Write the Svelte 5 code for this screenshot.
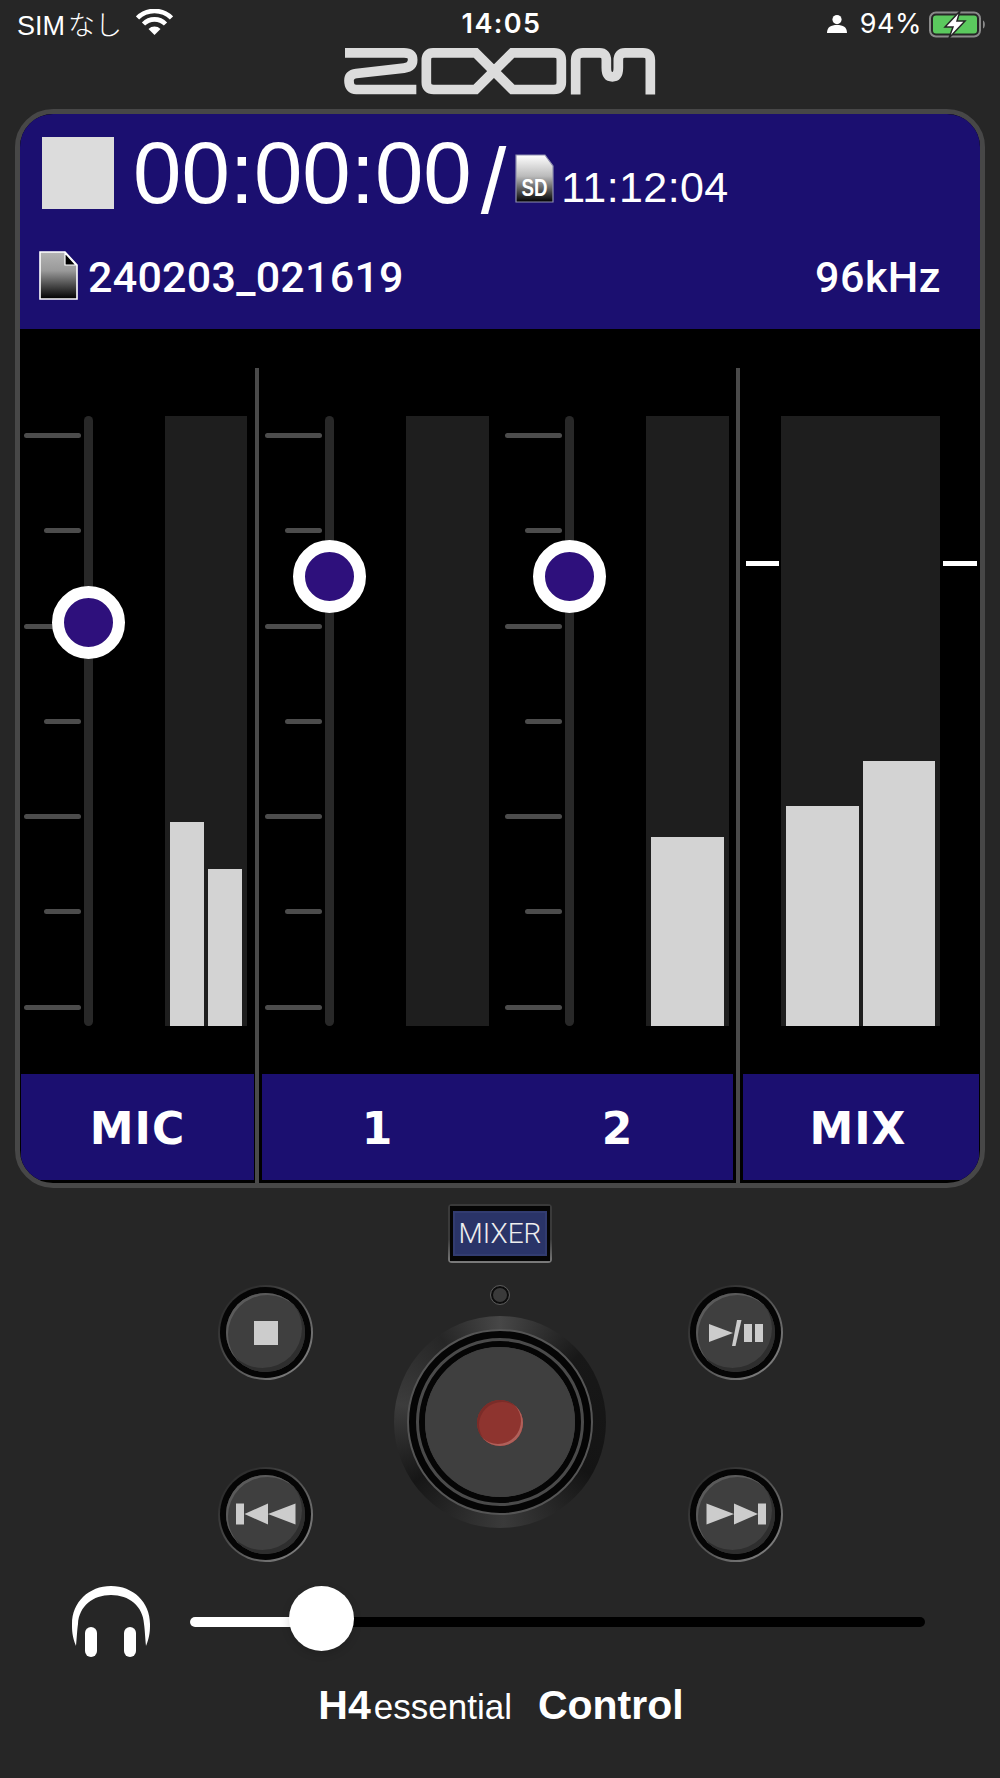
<script>
  const ticks = [57, 37, 57, 37, 57, 37, 57];

  const strips = [
    { knob: 206, meter: [204, 157], width: 82 },
    { knob: 160, meter: [], width: 83 },
    { knob: 160, meter: [189], width: 83 }
  ];

  const sliderFill = 132;
</script>

<div class="app">
  <div class="status">
    <div class="status-left">
      <span class="carrier">SIM<span class="cjk">なし</span></span>
      <svg class="wifi" viewBox="0 0 37 27" width="37" height="27">
        <path d="M18.5 26 L12.5 20 A8.5 8.5 0 0 1 24.5 20 Z" fill="#fff" />
        <path d="M7.5 15 A15.5 15.5 0 0 1 29.5 15" fill="none" stroke="#fff" stroke-width="4.6" />
        <path d="M1.5 9 A24 24 0 0 1 35.5 9" fill="none" stroke="#fff" stroke-width="4.6" />
      </svg>
    </div>
    <div class="clock">14:05</div>
    <div class="status-right">
      <svg viewBox="0 0 20 18" width="20" height="18">
        <circle cx="10" cy="4.6" r="4.6" fill="#fff" />
        <path d="M0 18 C0 12 4 10 10 10 C16 10 20 12 20 18 Z" fill="#fff" />
      </svg>
      <span class="pct">94%</span>
      <svg class="battery" viewBox="0 0 57 27" width="57" height="27">
        <rect x="1" y="1.5" width="50" height="24" rx="6" fill="none" stroke="#8a8a8a" stroke-width="2" />
        <rect x="4" y="4.5" width="44" height="18" rx="3" fill="#5bc95e" />
        <path d="M54 9.5 C56.5 10.5 56.5 16.5 54 17.5 Z" fill="#8a8a8a" />
        <path d="M31 0 L16 16 H24 L20 27 L36 10 H28 Z" fill="#fff" stroke="#262626" stroke-width="1.5" />
      </svg>
    </div>
  </div>

  <svg class="logo" viewBox="75 55 936 140" width="312" height="47">
    <g fill="none" stroke="#dcdcdc" stroke-width="29">
      <path d="M78 69 H255 Q281 69 281 90 Q281 112 255 115 L112 131 Q90 134 90 152 Q90 179 112 179 H292" />
      <path d="M342 69 H470 L580 179 H705 Q727 179 727 157 V91 Q727 69 705 69 H580 L470 179 H344 Q322 179 322 157 V91 Q322 69 342 69 Z" />
      <path d="M770 194 V91 Q770 69 792 69 H842 Q862 69 862 91 V114 Q862 141 880 141 Q898 141 898 114 V91 Q898 69 918 69 H972 Q994 69 994 91 V194" />
    </g>
  </svg>

  <div class="panel">
    <div class="head">
      <div class="time-row">
        <div class="stop-mark"></div>
        <span class="time">00:00:00</span>
        <span class="slash">/</span>
        <svg class="sd" viewBox="0 0 39 49" width="39" height="49">
          <defs>
            <linearGradient id="sdfill" x1="0" y1="0" x2="0" y2="1">
              <stop offset="0" stop-color="#fff" />
              <stop offset="0.45" stop-color="#bbb" />
              <stop offset="1" stop-color="#000" />
            </linearGradient>
          </defs>
          <path d="M1 1 H30 L38 12 V48 H1 Z" fill="url(#sdfill)" stroke="#8f8fb0" stroke-width="1.2" />
          <text x="6.5" y="42" textLength="26" lengthAdjust="spacingAndGlyphs" class="sd-text">SD</text>
        </svg>
        <span class="remain">11:12:04</span>
      </div>
      <div class="file-row">
        <svg class="file" viewBox="0 0 39 49" width="39" height="49">
          <defs>
            <linearGradient id="filefill" x1="0" y1="0" x2="0" y2="1">
              <stop offset="0" stop-color="#b4b4b4" />
              <stop offset="0.4" stop-color="#999" />
              <stop offset="1" stop-color="#000" />
            </linearGradient>
          </defs>
          <path d="M1 1 H26 L38 14 V48 H1 Z" fill="url(#filefill)" stroke="#fff" stroke-width="1.6" />
          <path d="M26 2 L37 14 H26 Z" fill="#000" stroke="#fff" stroke-width="1.2" />
        </svg>
        <span class="name">240203_021619</span>
        <span class="rate">96kHz</span>
      </div>
    </div>

    <div class="board">
      <div class="group mic">
        <div class="strips">
          {@render strip(strips[0])}
        </div>
        <div class="label">MIC</div>
      </div>
      <div class="rule"></div>
      <div class="group stereo">
        <div class="strips">
          {@render strip(strips[1])}
          {@render strip(strips[2])}
        </div>
        <div class="label"><span>1</span><span>2</span></div>
      </div>
      <div class="rule"></div>
      <div class="group mix">
        <div class="strips">
          <div class="meter master">
            <i class="peak peak-l"></i>
            <i class="peak peak-r"></i>
            <b style="height: 220px"></b>
            <b style="height: 265px"></b>
          </div>
        </div>
        <div class="label">MIX</div>
      </div>
    </div>
  </div>

  <div class="mode">
    <div class="mode-in">MIXER</div>
  </div>

  <div class="deck">
    <div class="side">
      <div class="btn"><div class="btn-ring"><div class="btn-face">
        <svg viewBox="0 0 24 24" width="24" height="24"><rect width="24" height="24" fill="#ccc" /></svg>
      </div></div></div>
      <div class="btn"><div class="btn-ring"><div class="btn-face">
        <svg class="skip" viewBox="0 0 60 22" width="60" height="22">
          <rect x="0" y="0.5" width="8" height="21" fill="#ccc" />
          <path d="M8.5 11 L32 0.5 V21.5 Z M32 11 L59.5 0.5 V21.5 Z" fill="#ccc" />
        </svg>
      </div></div></div>
    </div>

    <div class="center">
      <div class="led"></div>
      <div class="jog">
        <div class="jog-a"><div class="jog-b"><div class="jog-face">
          <div class="rec"></div>
        </div></div></div>
      </div>
    </div>

    <div class="side right">
      <div class="btn"><div class="btn-ring"><div class="btn-face">
        <svg viewBox="0 0 54 26" width="54" height="26">
          <path d="M0 4 L24 13 L0 22 Z" fill="#ccc" />
          <path d="M28 0 H32.5 L26.5 26 H23 Z" fill="#ccc" />
          <rect x="35" y="4" width="8" height="18" fill="#ccc" />
          <rect x="46" y="4" width="8" height="18" fill="#ccc" />
        </svg>
      </div></div></div>
      <div class="btn"><div class="btn-ring"><div class="btn-face">
        <svg class="skip" viewBox="0 0 60 22" width="60" height="22">
          <path d="M0.5 0.5 L28 11 L0.5 21.5 Z M28 0.5 L52 11 L28 21.5 Z" fill="#ccc" />
          <rect x="52" y="0.5" width="8" height="21" fill="#ccc" />
        </svg>
      </div></div></div>
    </div>
  </div>

  <div class="volume">
    <svg class="phones" viewBox="0 0 78 71" width="78" height="71">
      <path d="M4 60 C0 50 0 44 0 38 C0 16 17 0 39 0 C61 0 78 16 78 38 C78 44 78 50 74 60 C73 50 73 45 72 38 C71 20 57 9 39 9 C21 9 7 20 6 38 C5 45 5 50 4 60 Z" fill="#fff" />
      <rect x="13" y="41" width="12" height="30" rx="6" fill="#fff" />
      <rect x="52" y="41" width="12" height="30" rx="6" fill="#fff" />
    </svg>
    <div class="slider">
      <div class="track"><div class="fill" style="width: {sliderFill}px"></div></div>
      <div class="thumb" style="left: {sliderFill - 33}px"></div>
    </div>
  </div>

  <div class="brand">
    <strong>H4</strong><span class="thin">essential</span><strong class="ctl">Control</strong>
  </div>
</div>

{#snippet strip(s)}
  <div class="strip">
    <div class="fader">
      <div class="ticks">
        {#each ticks as w}
          <i style="width: {w}px"></i>
        {/each}
      </div>
      <div class="rail">
        <div class="knob" style="top: {s.knob - 36.5}px"></div>
      </div>
    </div>
    <div class="meter" style="width: {s.width}px">
      {#each s.meter as h}
        <b style="height: {h}px"></b>
      {/each}
    </div>
  </div>
{/snippet}

<style>
  :global(body) {
    margin: 0;
    background: #262626;
  }

  .app {
    width: 1000px;
    height: 1778px;
    background: #262626;
    display: flex;
    flex-direction: column;
    font-family: "Liberation Sans", Arial, sans-serif;
    color: #fff;
    overflow: hidden;
  }

  /* status bar */
  .status {
    height: 47px;
    padding: 0 14px 0 17px;
    display: grid;
    grid-template-columns: 1fr auto 1fr;
    align-items: center;
    font-size: 27px;
    flex-shrink: 0;
  }
  .status-left {
    display: flex;
    align-items: center;
    gap: 14px;
    height: 47px;
  }
  .carrier {
    font-family: "Liberation Sans", sans-serif;
  }
  .cjk {
    font-family: "Noto Sans CJK JP", sans-serif;
    font-weight: 300;
    font-size: 27px;
    margin-left: 3px;
  }
  .wifi {
    margin-top: -2px;
  }
  .clock {
    font-family: Inter, sans-serif;
    font-weight: 600;
    font-size: 27px;
    letter-spacing: 1.4px;
  }
  .status-right {
    display: flex;
    align-items: center;
    justify-content: flex-end;
    gap: 13px;
  }
  .pct {
    font-family: Inter, sans-serif;
    font-size: 27px;
    letter-spacing: 0.5px;
    margin-right: -6px;
  }
  .battery {
    margin-top: 1px;
  }

  .logo {
    align-self: center;
    margin-top: 1px;
    flex-shrink: 0;
  }

  /* main panel */
  .panel {
    margin: 14px 15px 0;
    width: 970px;
    height: 1079px;
    box-sizing: border-box;
    border: 5px solid #474747;
    border-radius: 38px;
    background: #000;
    overflow: hidden;
    flex-shrink: 0;
  }
  .head {
    height: 215px;
    background: #1b0f70;
    box-sizing: border-box;
    display: flex;
    flex-direction: column;
  }
  .time-row {
    height: 137px;
    padding: 23px 0 0 22px;
    box-sizing: border-box;
    display: flex;
    align-items: flex-start;
  }
  .stop-mark {
    width: 72px;
    height: 72px;
    background: #dcdcdc;
  }
  .time {
    font-size: 87px;
    line-height: 87px;
    margin: -8px 0 0 19px;
  }
  .slash {
    font-size: 92px;
    line-height: 92px;
    margin: -2px 0 0 9px;
  }
  .sd {
    margin: 17px 0 0 9px;
  }
  .sd-text {
    font-family: "Liberation Sans", sans-serif;
    font-weight: 700;
    font-size: 23.7px;
    fill: #fff;
  }
  .remain {
    font-size: 43px;
    line-height: 43px;
    letter-spacing: 0.4px;
    margin: 28.5px 0 0 7px;
  }
  .file-row {
    display: flex;
    align-items: flex-start;
    padding: 0 39px 0 19px;
  }
  .name,
  .rate {
    font-family: Roboto, sans-serif;
    font-weight: 500;
    font-size: 43px;
    line-height: 52px;
  }
  .name {
    margin-left: 10px;
    letter-spacing: 0.25px;
  }
  .rate {
    margin-left: auto;
    letter-spacing: 0.5px;
  }

  /* mixer */
  .board {
    height: 854px;
    display: flex;
  }
  .group {
    display: flex;
    flex-direction: column;
  }
  .mic {
    width: 235px;
  }
  .stereo {
    width: 477px;
  }
  .mix {
    width: 240px;
  }
  .rule {
    width: 4px;
    margin-top: 39px;
    background: #4a4a4a;
  }
  .strips {
    height: 745px;
    box-sizing: border-box;
    padding-top: 87px;
    display: flex;
    align-items: flex-start;
    gap: 16px;
  }
  .mic .strips {
    padding-left: 4px;
  }
  .stereo .strips {
    padding-left: 6px;
  }
  .mix .strips {
    padding-left: 41px;
  }
  .strip {
    display: flex;
    height: 610px;
    gap: 72px;
  }
  .fader {
    display: flex;
    gap: 3px;
  }
  .ticks {
    width: 57px;
    display: flex;
    flex-direction: column;
    align-items: flex-end;
    padding-top: 17px;
    gap: 90.3px;
  }
  .ticks i {
    display: block;
    height: 5px;
    border-radius: 3px;
    background: #4c4c4c;
  }
  .rail {
    position: relative;
    width: 9px;
    height: 610px;
    border-radius: 5px;
    background: #282828;
  }
  .knob {
    position: absolute;
    left: -32px;
    width: 49px;
    height: 49px;
    border: 12px solid #fff;
    border-radius: 50%;
    background: #2e107c;
  }
  .meter {
    position: relative;
    height: 610px;
    box-sizing: border-box;
    padding: 0 5px;
    display: flex;
    align-items: flex-end;
    gap: 4px;
    background: #1e1e1e;
  }
  .meter b {
    display: block;
    flex: 1;
    background: #d3d3d3;
  }
  .master {
    width: 159px;
    gap: 4px;
  }
  .peak {
    position: absolute;
    top: 145px;
    height: 5px;
    background: #fff;
  }
  .peak-l {
    left: -35px;
    width: 33px;
  }
  .peak-r {
    right: -37px;
    width: 34px;
  }
  .label {
    height: 106px;
    box-sizing: border-box;
    padding-top: 3px;
    background: #1b0f70;
    display: flex;
    align-items: center;
    justify-content: center;
    font-family: "DejaVu Sans", sans-serif;
    font-weight: 700;
    font-size: 44px;
    letter-spacing: 1px;
  }
  .mic .label {
    margin: 0 1px;
  }
  .stereo .label {
    margin: 0 3px;
  }
  .stereo .label span {
    flex: none;
    width: 240px;
    text-align: center;
  }
  .mix .label {
    margin: 0 1px 0 3px;
    padding-right: 6px;
  }

  /* hardware buttons */
  .mode {
    align-self: center;
    margin-top: 16px;
    width: 104px;
    height: 59px;
    box-sizing: border-box;
    padding: 2px;
    border-radius: 4px;
    background: linear-gradient(#3a3a3a, #3a3a3a 60%, #7c7c7c);
    flex-shrink: 0;
  }
  .mode-in {
    height: 100%;
    box-sizing: border-box;
    border: solid #050505;
    border-width: 5px 3px;
    background: #2a3468;
    box-shadow: inset 0 0 0 2px #323c70;
    display: flex;
    align-items: center;
    justify-content: center;
    font-family: Roboto, sans-serif;
    font-weight: 300;
    font-size: 28px;
    color: #eee;
  }
  .deck {
    margin-top: 22px;
    display: flex;
    justify-content: center;
    gap: 81px;
    padding-left: 1px;
    flex-shrink: 0;
  }
  .side {
    display: flex;
    flex-direction: column;
    gap: 87px;
  }
  .right {
    margin-left: 1px;
  }
  .btn {
    width: 95px;
    height: 95px;
    box-sizing: border-box;
    padding: 2px;
    border-radius: 50%;
    background: linear-gradient(135deg, #2f2f2f 20%, #7a7a7a 85%);
  }
  .btn-ring {
    height: 100%;
    border-radius: 50%;
    background: #050505;
    display: flex;
    align-items: center;
    justify-content: center;
  }
  .btn-face {
    width: 79px;
    height: 79px;
    border-radius: 50%;
    background: #3f3f3f;
    box-shadow:
      inset 2px 2px 0 #5a5a5a,
      inset -3px -4px 0 #2e2e2e;
    display: flex;
    align-items: center;
    justify-content: center;
  }
  .skip {
    margin-top: -2px;
  }
  .center {
    display: flex;
    flex-direction: column;
    align-items: center;
    gap: 12px;
    padding-top: 1px;
  }
  .led {
    width: 14px;
    height: 14px;
    border: 2px solid #0c0c0c;
    outline: 1px solid #5a5a5a;
    border-radius: 50%;
    background: #3a3a3a;
  }
  .jog {
    width: 212px;
    height: 212px;
    border-radius: 50%;
    background: conic-gradient(
      #474747 0deg,
      #181818 50deg,
      #141414 120deg,
      #3a3a3a 178deg,
      #161616 235deg,
      #3c3c3c 280deg,
      #262626 325deg,
      #474747 360deg
    );
    display: flex;
    align-items: center;
    justify-content: center;
  }
  .jog-a {
    width: 168px;
    height: 168px;
    border: 8px solid #050505;
    outline: 2px solid #555;
    outline-offset: -1px;
    border-radius: 50%;
    background: #4a4a4a;
    display: flex;
    align-items: center;
    justify-content: center;
  }
  .jog-b {
    width: 150px;
    height: 150px;
    border: 6px solid #050505;
    border-radius: 50%;
    background: #3f3f3f;
    display: flex;
    align-items: center;
    justify-content: center;
  }
  .jog-face {
    width: 150px;
    height: 150px;
    border-radius: 50%;
    background: #3f3f3f;
    display: flex;
    align-items: center;
    justify-content: center;
  }
  .rec {
    width: 46px;
    height: 46px;
    margin-top: 1px;
    border-radius: 50%;
    background: #8e342f;
    box-shadow:
      inset -2px -2px 0 #b0605a,
      inset 2px 2px 0 #7a2c28;
  }

  /* volume */
  .volume {
    margin-top: 24px;
    padding-left: 72px;
    display: flex;
    gap: 40px;
    flex-shrink: 0;
  }
  .slider {
    position: relative;
    width: 735px;
    height: 71px;
  }
  .track {
    margin-top: 31px;
    height: 10px;
    border-radius: 5px;
    background: #000;
    overflow: hidden;
  }
  .fill {
    height: 100%;
    background: #fff;
  }
  .thumb {
    position: absolute;
    top: 0;
    width: 65px;
    height: 65px;
    border-radius: 50%;
    background: #fff;
    box-shadow: 0 3px 8px rgba(0, 0, 0, 0.15);
  }

  .brand {
    margin-top: 25px;
    display: flex;
    align-items: baseline;
    justify-content: center;
    padding-left: 2px;
    font-size: 41px;
    line-height: 46px;
  }
  .brand strong {
    font-weight: 700;
  }
  .thin {
    font-size: 35px;
    margin-left: 3px;
  }
  .ctl {
    margin-left: 26px;
  }
</style>
